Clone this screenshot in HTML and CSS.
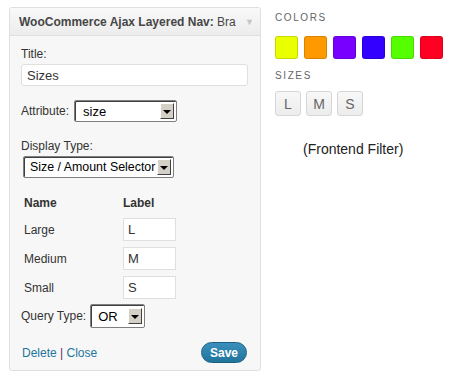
FILE: index.html
```html
<!DOCTYPE html>
<html>
<head>
<meta charset="utf-8">
<link rel="stylesheet" href="styles.css">
</head>
<body>
<div class="page">
  <div class="widget">
    <div class="head">
      <span class="head-title"><b>WooCommerce Ajax Layered Nav:</b> Bra</span>
      <span class="head-arrow">&#9660;</span>
    </div>
    <div class="body">
      <div class="lbl">Title:</div>
      <div class="text-in wide">Sizes</div>

      <div class="row attr">
        <span class="lbl">Attribute:</span>
        <div class="sel sel-attr"><span class="sel-val">size</span><span class="sel-btn"><i></i></span></div>
      </div>

      <div class="lbl dt">Display Type:</div>
      <div class="sel sel-dt"><span class="sel-val">Size / Amount Selector</span><span class="sel-btn"><i></i></span></div>

      <div class="grid">
        <div class="th">Name</div><div class="th">Label</div>
        <div class="td">Large</div><div class="td"><div class="text-in small">L</div></div>
        <div class="td">Medium</div><div class="td"><div class="text-in small">M</div></div>
        <div class="td">Small</div><div class="td"><div class="text-in small">S</div></div>
      </div>

      <div class="row qt">
        <span class="lbl">Query Type:</span>
        <div class="sel sel-qt"><span class="sel-val">OR</span><span class="sel-btn"><i></i></span></div>
      </div>

      <div class="foot">
        <span class="links"><a>Delete</a> <span class="bar">|</span> <a>Close</a></span>
        <span class="save">Save</span>
      </div>
    </div>
  </div>

  <div class="side">
    <div class="cap">COLORS</div>
    <div class="swatches">
      <span class="sw" style="background:#eaff00"></span>
      <span class="sw" style="background:#ff9900"></span>
      <span class="sw" style="background:#7700ff"></span>
      <span class="sw" style="background:#3300ff"></span>
      <span class="sw" style="background:#55ff00"></span>
      <span class="sw" style="background:#ff0022"></span>
    </div>
    <div class="cap sizes">SIZES</div>
    <div class="sizebtns">
      <span class="sb">L</span><span class="sb">M</span><span class="sb">S</span>
    </div>
    <div class="note">(Frontend Filter)</div>
  </div>
</div>
</body>
</html>
```

FILE: styles.css
```css
html, body { margin: 0; padding: 0; background: #fff; }
body { font-family: "Liberation Sans", Arial, sans-serif; color: #333; }

.page { display: flex; padding: 7px 0 0 9px; }

.widget {
  width: 250px; height: 362px;
  border: 1px solid #dfdfdf; border-radius: 3px;
  background: #f7f7f7;
  box-sizing: content-box;
  overflow: hidden;
}
.head {
  height: 27px; border-bottom: 1px solid #dfdfdf;
  background: linear-gradient(#f9f9f9, #ececec);
  display: flex; align-items: center; padding: 0 0 0 9px;
  font-size: 12px; color: #464646;
  white-space: nowrap;
}
.head-title { overflow: hidden; width: 220px; font-weight: normal; }
.head-title b { font-weight: bold; }
.head-arrow { color: #c4c4c4; font-size: 9px; margin-left: 6px; }

.body { padding: 10px 13px 0 11px; font-size: 12px; }
.lbl { line-height: 16px; font-size: 12px; color: #333; }

.text-in {
  background: #fff; border: 1px solid #dfdfdf; border-radius: 3px;
  box-sizing: border-box; font-size: 13px; color: #333;
  padding: 0 5px; display: flex; align-items: center;
}
.text-in.wide { height: 22px; margin-top: 2px; width: 227px; }
.text-in.small { height: 23px; width: 53px; padding-left: 4px; border-radius: 0; }

.row { display: flex; align-items: center; gap: 5px; }
.row.attr { margin-top: 14px; }

.sel {
  display: flex; align-items: center; background: #fff;
  border: 1px solid #7f7f7f; box-shadow: inset 1px 1px 0 #404040;
  box-sizing: border-box; height: 22px; padding: 0 2px 0 8px;
  font-size: 13px; color: #000; border-radius: 2px;
}
.sel-val { flex: 1; white-space: nowrap; overflow: hidden; }
.sel-btn {
  flex: none;
  width: 14px; height: 16px; background: #d4d0c8;
  border: 1px solid; border-color: #fff #404040 #404040 #fff;
  display: flex; align-items: center; justify-content: center;
  box-sizing: border-box;
}
.sel-btn i {
  width: 0; height: 0; border-left: 4px solid transparent; border-right: 4px solid transparent;
  border-top: 4px solid #000; margin-top: 1px;
}
.sel-attr { width: 103px; }
.lbl.dt { margin-top: 16px; }
.sel-dt { width: 151px; margin-top: 2px; margin-left: 2px; padding-left: 6px; font-size: 12.4px; }
.sel-dt .sel-val { overflow: visible; }
.sel-qt { width: 55px; height: 24px; padding-left: 7px; }

.grid {
  display: grid; grid-template-columns: 99px 60px;
  margin-top: 17px; margin-left: 3px; row-gap: 6px;
}
.th { font-weight: bold; line-height: 16px; font-size: 12px; color: #333; }
.td { display: flex; align-items: center; font-size: 12px; height: 23px; color: #333; }
.grid .td:nth-child(3), .grid .td:nth-child(4) { margin-top: 1px; }

.row.qt { margin-top: 5px; gap: 4px; }

.foot { display: flex; justify-content: space-between; align-items: center; margin-top: 14px; }
.links { font-size: 12px; color: #21759b; padding-left: 1px; }
.links a { color: #21759b; }
.links .bar { color: #6b2f5e; }
.save {
  width: 46px; height: 21px; border-radius: 11px; box-sizing: border-box;
  background: linear-gradient(#3a8fbd, #21759b);
  border: 1px solid #1b607f; color: #fff; font-weight: bold; font-size: 12px;
  display: flex; align-items: center; justify-content: center;
}

.side { margin-left: 14px; display: flex; flex-direction: column; }
.cap { font-size: 10px; letter-spacing: 1.6px; color: #666; line-height: 14px; margin-top: 4px; }
.swatches { display: flex; gap: 6px; margin-top: 11px; }
.sw { width: 23px; height: 23px; border-radius: 3px; box-sizing: border-box; border: 1px solid rgba(0,0,0,0.15); }
.cap.sizes { margin-top: 10px; }
.sizebtns { display: flex; gap: 5px; margin-top: 8px; }
.sb {
  width: 26px; height: 25px; box-sizing: border-box; border: 1px solid #d6d6d6; border-radius: 3px;
  background: linear-gradient(#f8f8f8, #ececec); color: #666; font-size: 14px;
  display: flex; align-items: center; justify-content: center;
}
.note { font-size: 14px; color: #222; margin-top: 25px; margin-left: 28px; }
```
